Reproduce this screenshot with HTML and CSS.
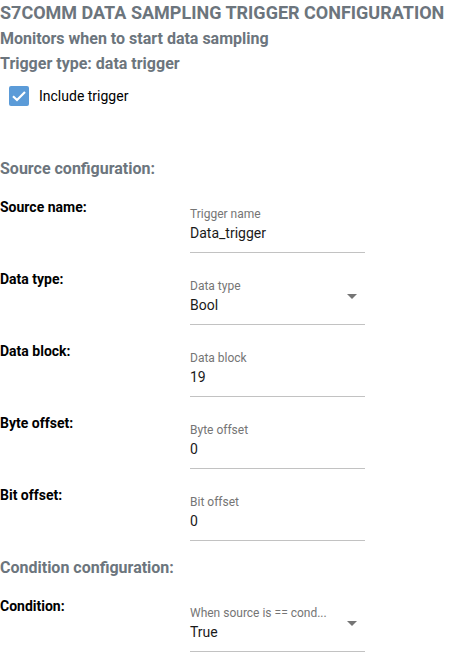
FILE: index.html
```html
<!DOCTYPE html>
<html>
<head>
<meta charset="utf-8">
<link rel="stylesheet" href="styles.css">
</head>
<body>
<div class="page">
  <h1 class="title">S7COMM DATA SAMPLING TRIGGER CONFIGURATION</h1>
  <h2 class="subtitle">Monitors when to start data sampling</h2>
  <h2 class="subtitle subtitle-2">Trigger type: data trigger</h2>
  <label class="check">
    <span class="box"><svg viewBox="0 0 20 20" width="20" height="20"><path d="M4 10.2 L8 14 L16 6" fill="none" stroke="#fff" stroke-width="2.2"/></svg></span>
    <span class="check-text">Include trigger</span>
  </label>

  <h3 class="section">Source configuration:</h3>

  <div class="row">
    <div class="row-label">Source name:</div>
    <div class="field">
      <div class="field-label">Trigger name</div>
      <div class="field-value">Data_trigger</div>
    </div>
  </div>
  <div class="row">
    <div class="row-label">Data type:</div>
    <div class="field">
      <div class="field-label">Data type</div>
      <div class="field-value">Bool</div>
      <span class="arrow"></span>
    </div>
  </div>
  <div class="row">
    <div class="row-label">Data block:</div>
    <div class="field">
      <div class="field-label">Data block</div>
      <div class="field-value">19</div>
    </div>
  </div>
  <div class="row">
    <div class="row-label">Byte offset:</div>
    <div class="field">
      <div class="field-label">Byte offset</div>
      <div class="field-value">0</div>
    </div>
  </div>
  <div class="row">
    <div class="row-label">Bit offset:</div>
    <div class="field">
      <div class="field-label">Bit offset</div>
      <div class="field-value">0</div>
    </div>
  </div>

  <h3 class="section section-2">Condition configuration:</h3>

  <div class="row">
    <div class="row-label">Condition:</div>
    <div class="field">
      <div class="field-label">When source is == cond...</div>
      <div class="field-value">True</div>
      <span class="arrow"></span>
    </div>
  </div>
</div>
</body>
</html>
```

FILE: styles.css
```css
html, body {
  margin: 0;
  padding: 0;
  background: #fff;
}
body {
  font-family: Roboto, "Noto Sans", sans-serif;
  color: #000;
}
.page {
  display: flex;
  flex-direction: column;
}
.title {
  margin: 0;
  font-size: 18px;
  line-height: 25px;
  font-weight: 700;
  color: #6c757d;
}
.subtitle {
  margin: 2px 0 0;
  font-size: 16px;
  line-height: 24px;
  font-weight: 700;
  color: #6c757d;
}
.subtitle-2 {
  margin-top: 1px;
}
.check {
  display: flex;
  align-items: center;
  gap: 10px;
  margin-top: 10px;
  padding-left: 9px;
  height: 20px;
}
.box {
  width: 20px;
  height: 20px;
  border-radius: 2px;
  background: #5b9bd8;
  display: flex;
}
.check-text {
  font-size: 14px;
  line-height: 20px;
  color: #000;
}
.section {
  margin: 52px 0 17px;
  font-size: 16px;
  line-height: 22px;
  font-weight: 700;
  color: #6c757d;
}
.section-2 {
  margin-top: 0;
}
.row {
  display: flex;
  height: 72px;
}
.row-label {
  width: 190px;
  font-size: 14px;
  line-height: 16px;
  font-weight: 700;
  padding-top: 2px;
}
.field {
  position: relative;
  width: 175px;
  height: 56px;
  border-bottom: 1px solid #c2c2c2;
  padding-top: 10px;
  box-sizing: border-box;
}
.field-label {
  font-size: 12px;
  line-height: 14px;
  color: #757575;
}
.field-value {
  font-size: 14px;
  line-height: 18px;
  margin-top: 3px;
  color: #1a1a1a;
}
.arrow {
  position: absolute;
  right: 8px;
  top: 25px;
  width: 0;
  height: 0;
  border-left: 5px solid transparent;
  border-right: 5px solid transparent;
  border-top: 5px solid #757575;
}
```
